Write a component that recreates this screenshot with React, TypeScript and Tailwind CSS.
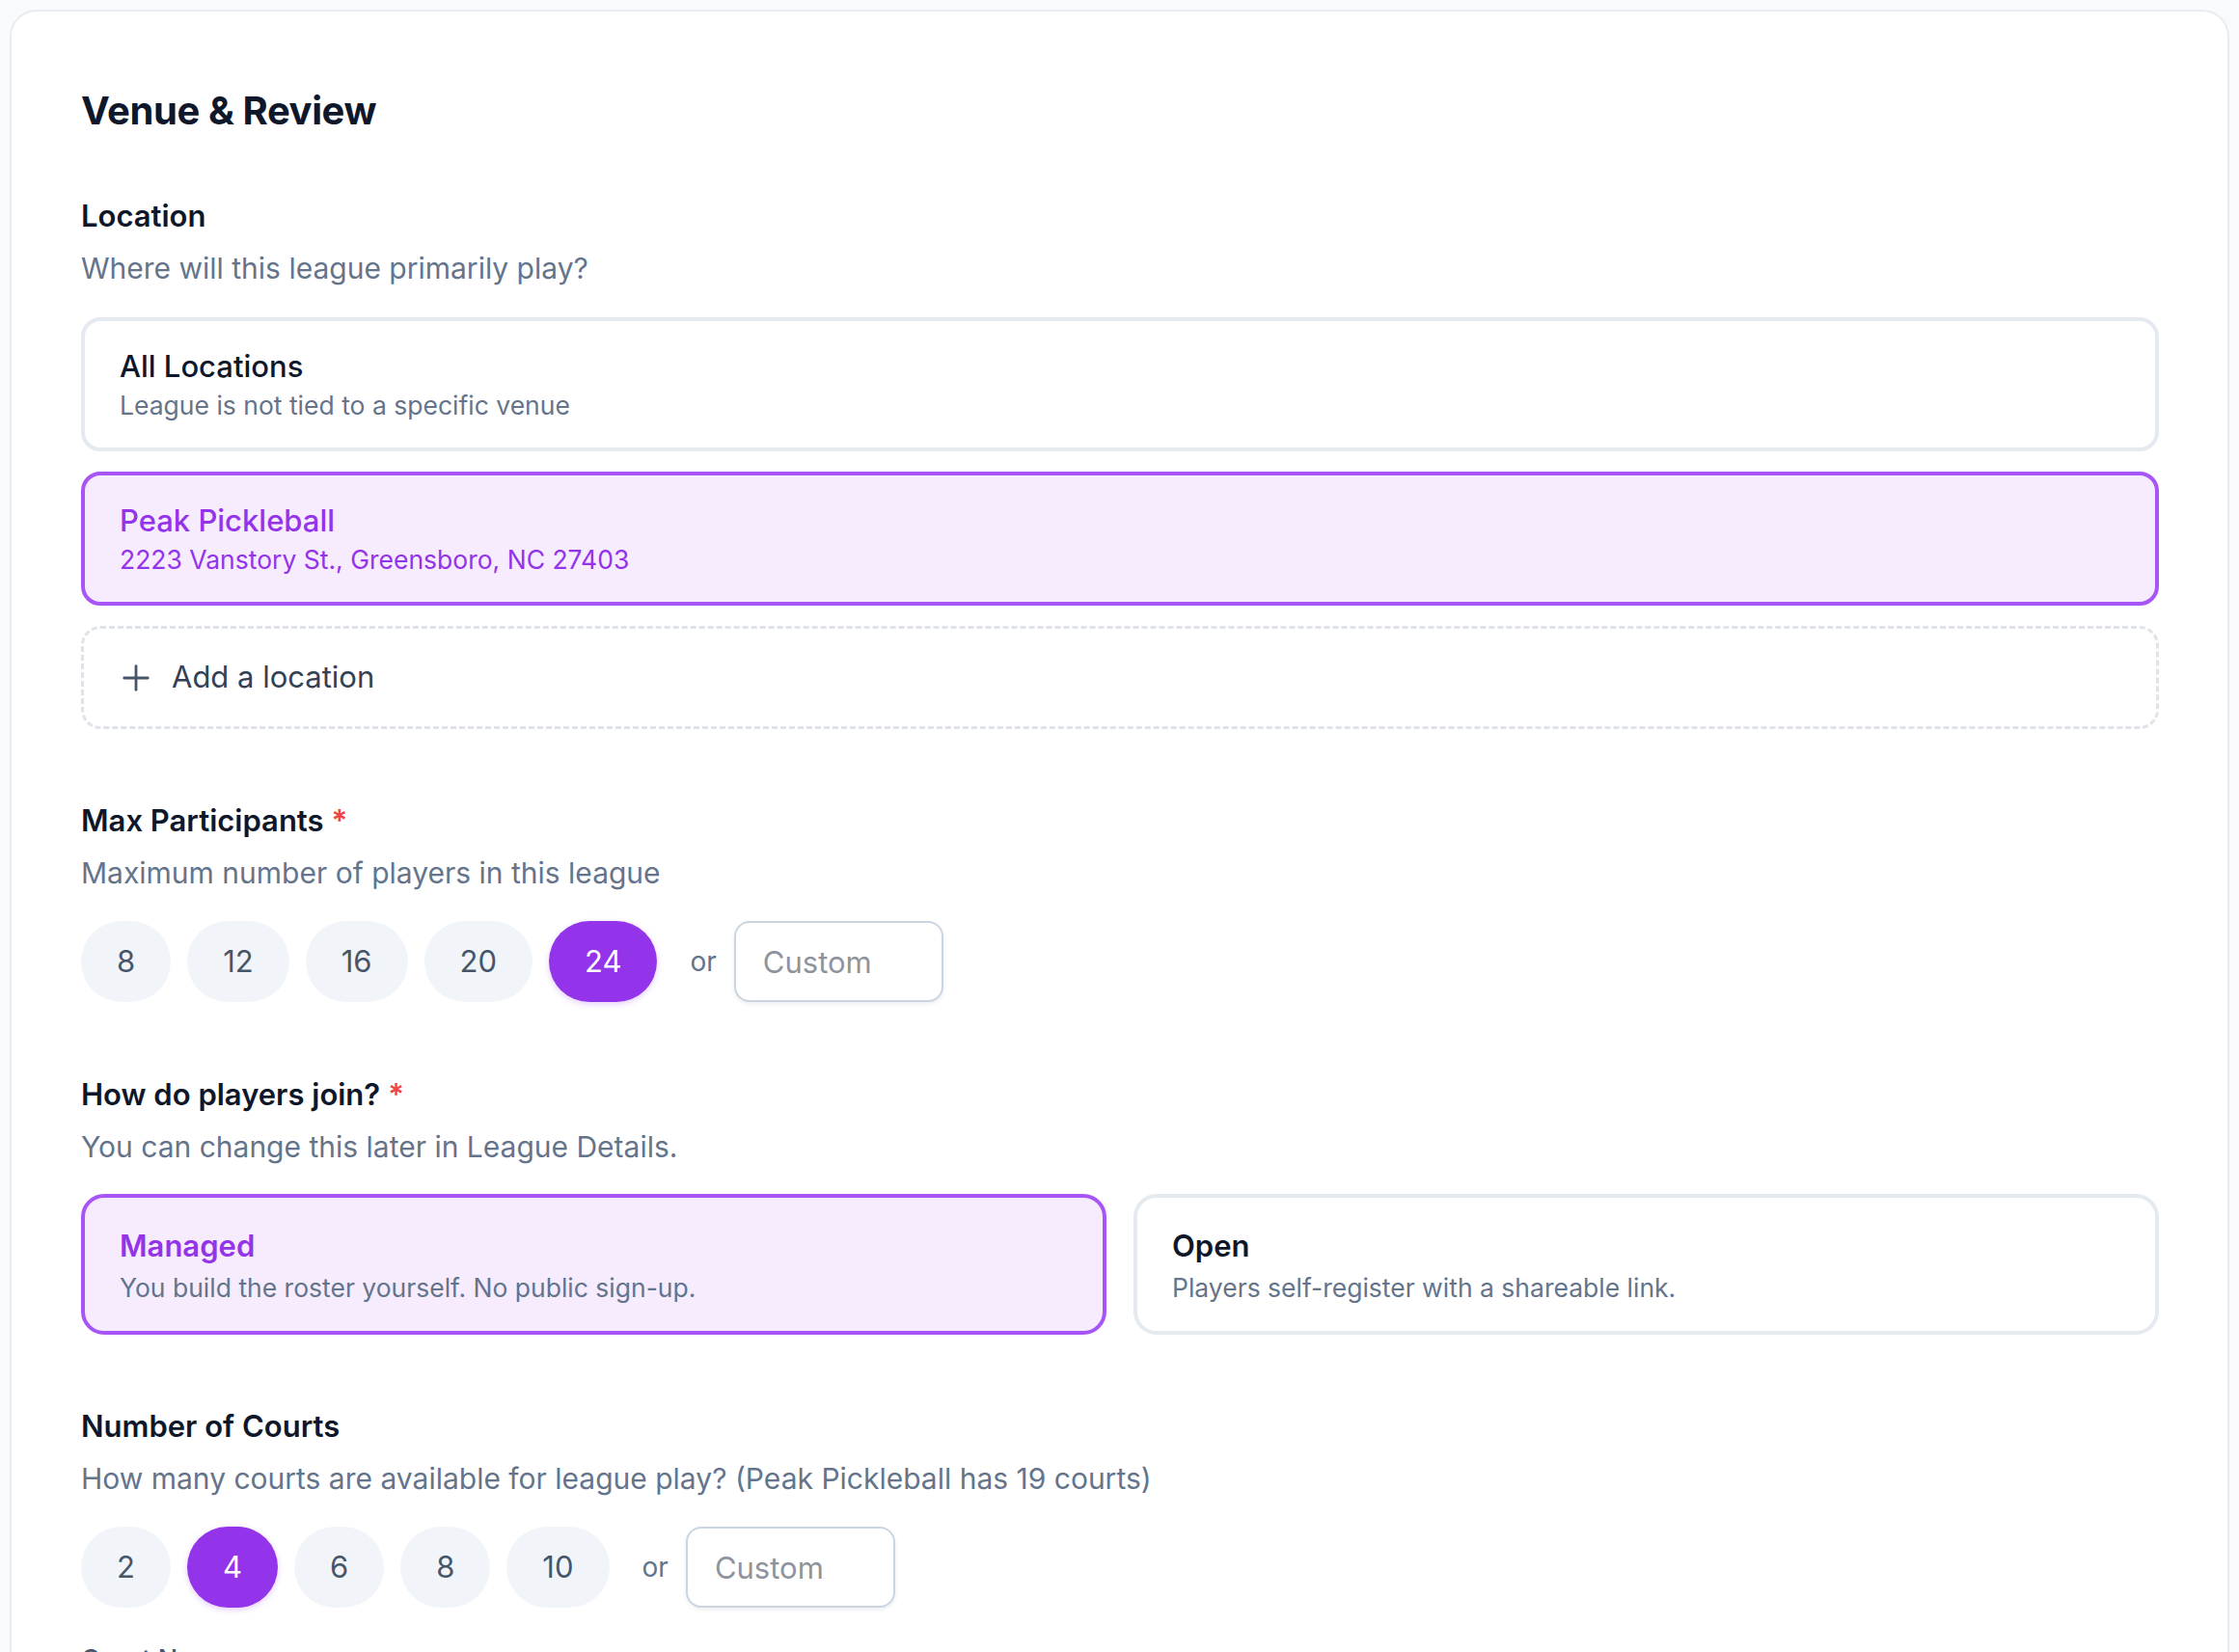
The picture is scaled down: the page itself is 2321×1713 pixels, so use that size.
import { Plus } from "lucide-react";

interface Choice {
  title: string;
  subtitle: string;
  selected?: boolean;
}

const locations: Choice[] = [
  { title: "All Locations", subtitle: "League is not tied to a specific venue" },
  {
    title: "Peak Pickleball",
    subtitle: "2223 Vanstory St., Greensboro, NC 27403",
    selected: true,
  },
];

const joinModes: Choice[] = [
  { title: "Managed", subtitle: "You build the roster yourself. No public sign-up.", selected: true },
  { title: "Open", subtitle: "Players self-register with a shareable link." },
];

function FieldLabel({ text, required }: { text: string; required?: boolean }) {
  return (
    <div className="text-[31px] leading-[40px] font-semibold text-[#0f172a]">
      {text}
      {required && <span className="ml-[8px] text-[#ef4444]">*</span>}
    </div>
  );
}

function FieldHint({ text }: { text: string }) {
  return <p className="mt-[14px] text-[30px] leading-[40px] text-[#64748b]">{text}</p>;
}

function ChipRow({ values, active }: { values: number[]; active: number }) {
  return (
    <div className="mt-[30px] flex items-center gap-[17px]">
      {values.map((v) => (
        <button
          key={v}
          className={
            v === active
              ? "h-[84px] rounded-full bg-[#9333ea] px-[37px] text-[31px] text-white shadow-[0_2px_6px_rgba(147,51,234,0.25)]"
              : "h-[84px] rounded-full bg-[#f1f5f9] px-[37px] text-[31px] text-[#475569]"
          }
        >
          {v}
        </button>
      ))}
      <span className="ml-[17px] mr-[1px] text-[28px] text-[#64748b]">or</span>
      <input
        placeholder="Custom"
        className="h-[84px] w-[217px] rounded-[16px] border-2 border-[#cbd5e1] bg-white px-[28px] text-[31px] text-[#0f172a] shadow-[0_2px_4px_rgba(15,23,42,0.08)] outline-none placeholder:text-[#8e939c]"
      />
    </div>
  );
}

export default function App() {
  return (
    <div className="min-h-screen bg-[#f8fafc] px-[10px] pt-[10px] font-['Inter',sans-serif]">
      <div className="rounded-[28px] border-2 border-[#e8ebf0] bg-white pb-[80px] pl-[72px] pr-[71px] pt-[79px]">
        <h1 className="text-[40px] leading-[48px] font-bold tracking-[-0.01em] text-[#0f172a]">
          Venue &amp; Review
        </h1>

        {/* Location */}
        <section className="mt-[65px]">
          <FieldLabel text="Location" />
          <FieldHint text="Where will this league primarily play?" />
          <div className="mt-[31px] flex flex-col gap-[21px]">
            {locations.map((loc) => (
              <div
                key={loc.title}
                className={
                  loc.selected
                    ? "rounded-[20px] border-4 border-[#a855f7] bg-[#f7ebfe] px-[36px] pt-[29px] pb-[27px]"
                    : "rounded-[20px] border-4 border-[#e5e9f0] bg-white px-[36px] pt-[29px] pb-[27px]"
                }
              >
                <div
                  className={
                    loc.selected
                      ? "text-[31px] leading-[36px] font-medium text-[#9333ea]"
                      : "text-[31px] leading-[36px] font-medium text-[#0f172a]"
                  }
                >
                  {loc.title}
                </div>
                <div
                  className={
                    loc.selected
                      ? "mt-[5px] text-[26.5px] leading-[34px] text-[#9333ea]"
                      : "mt-[5px] text-[26.5px] leading-[34px] text-[#64748b]"
                  }
                >
                  {loc.subtitle}
                </div>
              </div>
            ))}
            <button className="flex h-[107px] items-center gap-[16px] rounded-[20px] border-[3px] border-dashed border-[#dfe3ea] pl-[33px] text-[31px] text-[#334155]">
              <Plus size={42} strokeWidth={1.6} className="text-[#475569]" />
              Add a location
            </button>
          </div>
        </section>

        {/* Max participants */}
        <section className="mt-[75px]">
          <FieldLabel text="Max Participants" required />
          <FieldHint text="Maximum number of players in this league" />
          <ChipRow values={[8, 12, 16, 20, 24]} active={24} />
        </section>

        {/* Join mode */}
        <section className="mt-[76px]">
          <FieldLabel text="How do players join?" required />
          <FieldHint text="You can change this later in League Details." />
          <div className="mt-[29px] grid grid-cols-2 gap-[28px]">
            {joinModes.map((m) => (
              <div
                key={m.title}
                className={
                  m.selected
                    ? "rounded-[24px] border-4 border-[#a855f7] bg-[#f7ebfe] px-[36px] pt-[32px] pb-[28px]"
                    : "rounded-[24px] border-4 border-[#e5e9f0] bg-white px-[36px] pt-[32px] pb-[28px]"
                }
              >
                <div
                  className={
                    m.selected
                      ? "text-[31px] leading-[36px] font-semibold text-[#9333ea]"
                      : "text-[31px] leading-[36px] font-semibold text-[#0f172a]"
                  }
                >
                  {m.title}
                </div>
                <div className="mt-[8px] text-[26.5px] leading-[34px] text-[#64748b]">{m.subtitle}</div>
              </div>
            ))}
          </div>
        </section>

        {/* Courts */}
        <section className="mt-[75px]">
          <FieldLabel text="Number of Courts" />
          <FieldHint text="How many courts are available for league play? (Peak Pickleball has 19 courts)" />
          <ChipRow values={[2, 4, 6, 8, 10]} active={4} />
        </section>

        <section className="mt-[34px]">
          <div className="text-[27px] leading-[40px] font-medium text-[#475569]">Court Names</div>
          <div className="mt-[20px] h-[200px]" />
        </section>
      </div>
    </div>
  );
}
